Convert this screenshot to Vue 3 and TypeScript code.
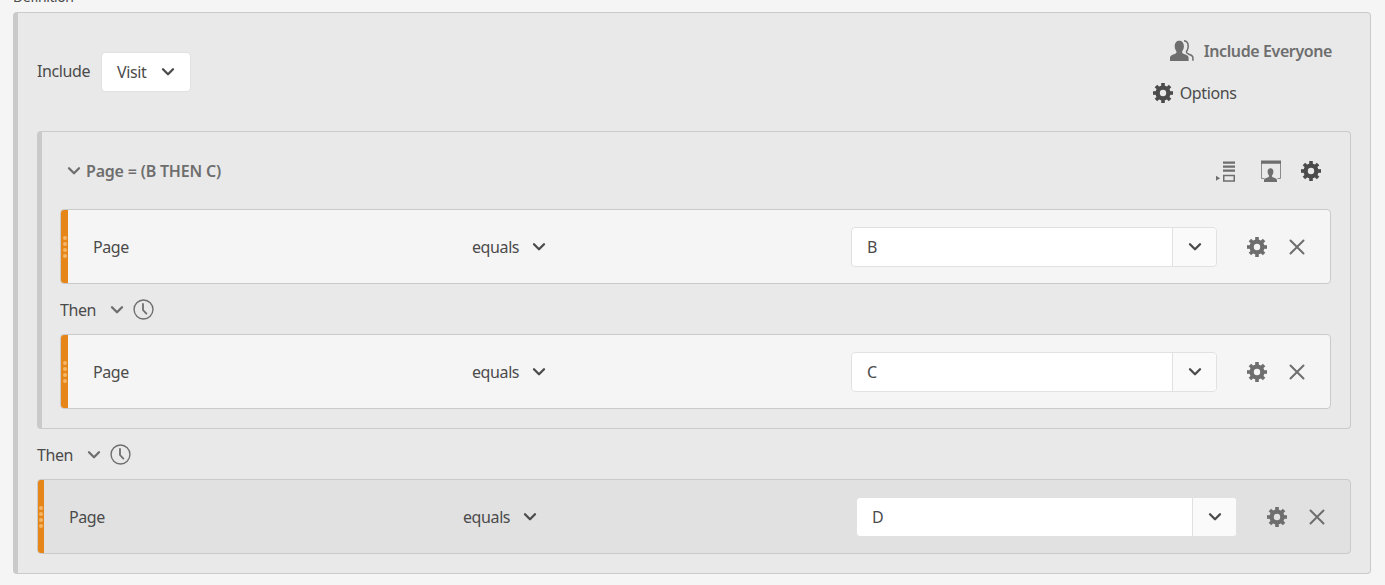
<script setup lang="ts">
interface Rule { value: string }
const innerRules: Rule[] = [{ value: 'B' }, { value: 'C' }]
const teeth = [0, 45, 90, 135, 180, 225, 270, 315]
</script>

<template>
  <div class="page">
    <svg class="defs" width="0" height="0" aria-hidden="true">
      <symbol id="gear" viewBox="0 0 20 20">
        <circle cx="10" cy="10" r="5.4" fill="none" stroke="currentColor" stroke-width="4.4" />
        <rect v-for="t in teeth" :key="t" x="8.2" y="0" width="3.6" height="4" fill="currentColor" :transform="`rotate(${t} 10 10)`" />
      </symbol>
      <symbol id="chev" viewBox="0 0 14 10">
        <path d="M2 2.200 7 7.200 12 2.200" fill="none" stroke="currentColor" stroke-width="2.300" stroke-linecap="round" stroke-linejoin="round" />
      </symbol>
      <symbol id="close" viewBox="0 0 16 16">
        <path d="M1.500 1.500 14.500 14.500M14.500 1.500 1.500 14.500" fill="none" stroke="currentColor" stroke-width="2" stroke-linecap="round" />
      </symbol>
      <symbol id="clock" viewBox="0 0 20 20">
        <circle cx="10" cy="10" r="9" fill="none" stroke="currentColor" stroke-width="1.300" />
        <path d="M9.500 4V10.500L13.200 14.500" fill="none" stroke="currentColor" stroke-width="1.700" />
      </symbol>
    </svg>

    <div class="label">Definition *</div>

    <section class="panel">
      <header class="top">
        <div class="include">
          <span class="txt">Include</span>
          <button class="select" type="button">
            <span class="txt">Visit</span>
            <svg class="chev dark"><use href="#chev" /></svg>
          </button>
        </div>
        <div class="top-actions">
          <div class="everyone">
            <svg class="people" viewBox="0 0 24 22">
              <path fill="#6e6e6e" d="M0 21v-3.500c0-1.700 2-2.600 4-3.300 1.800-.6 2.500-1.200 2.500-2.200 0-.7-.5-1.200-1-2.200C4.900 8.700 4.700 7.500 4.700 6.200 4.700 2.700 6.600.7 9.300.7s4.600 2 4.600 5.500c0 1.300-.2 2.500-.8 3.600-.5 1-1 1.500-1 2.200 0 1 .7 1.600 2.500 2.200 2 .7 4 1.600 4 3.300V21Z" />
              <path fill="none" stroke="#6e6e6e" stroke-width="1.500" d="M14 .8c2.500.2 4.200 2.200 4.200 5.400 0 1.300-.3 2.500-.8 3.600-.5 1-1 1.500-1 2.200 0 1 .7 1.500 2.500 2.200 2 .7 4 1.600 4 3.300v3.300" />
            </svg>
            <span>Include Everyone</span>
          </div>
          <div class="options">
            <svg class="gear darker"><use href="#gear" /></svg>
            <span class="txt">Options</span>
          </div>
        </div>
      </header>

      <section class="group">
        <div class="group-head">
          <div class="group-title">
            <svg class="chev small"><use href="#chev" /></svg>
            <span>Page = (B THEN C)</span>
          </div>
          <div class="group-icons">
            <svg class="ico" viewBox="0 0 20 22">
              <path fill="#6e6e6e" d="M7 1.500h12v2.200H7zM7 5.500h12v2.200H7zM7 9.500h12v2.200H7z" />
              <path fill="none" stroke="#6e6e6e" stroke-width="1.500" d="M7.750 15.500h10.500v5.500H7.750z" />
              <path fill="#6e6e6e" d="M0 15.800 4 18.300 0 20.800z" />
            </svg>
            <svg class="ico" viewBox="0 0 20 22">
              <path fill="none" stroke="#8a8a8a" stroke-width="1" d="M3.500 18.500H.5V2h19v16.500h-3" />
              <path fill="#6e6e6e" d="M0 .5h20v3.200H0zM3 22v-2c0-1.300 1.800-1.900 3.500-2.500 1.200-.4 1.600-.9 1.600-1.500 0-.5-.4-.9-.9-1.700-.4-.8-.6-1.500-.6-2.500 0-2.200 1-3.600 2.900-3.600s2.900 1.400 2.900 3.600c0 1-.2 1.700-.6 2.500-.5.800-.9 1.200-.9 1.700 0 .6.400 1.100 1.600 1.500 1.700.6 3.500 1.200 3.500 2.500v2z" />
            </svg>
            <svg class="gear darker"><use href="#gear" /></svg>
          </div>
        </div>

        <template v-for="(r, i) in innerRules" :key="r.value">
          <div v-if="i > 0" class="then inner-then">
            <span class="txt">Then</span>
            <svg class="chev small"><use href="#chev" /></svg>
            <svg class="clock"><use href="#clock" /></svg>
          </div>
          <div class="rule">
            <div class="grip"><i /><i /><i /><i /></div>
            <span class="txt field">Page</span>
            <div class="op"><span class="txt">equals</span><svg class="chev dark"><use href="#chev" /></svg></div>
            <div class="combo">
              <span class="txt combo-value">{{ r.value }}</span>
              <span class="combo-btn"><svg class="chev dark"><use href="#chev" /></svg></span>
            </div>
            <svg class="gear soft"><use href="#gear" /></svg>
            <svg class="x"><use href="#close" /></svg>
          </div>
        </template>
      </section>

      <div class="then outer-then">
        <span class="txt">Then</span>
        <svg class="chev small"><use href="#chev" /></svg>
        <svg class="clock"><use href="#clock" /></svg>
      </div>

      <div class="rule wide">
        <div class="grip"><i /><i /><i /><i /></div>
        <span class="txt field">Page</span>
        <div class="op"><span class="txt">equals</span><svg class="chev dark"><use href="#chev" /></svg></div>
        <div class="combo">
          <span class="txt combo-value">D</span>
          <span class="combo-btn"><svg class="chev dark"><use href="#chev" /></svg></span>
        </div>
        <svg class="gear soft"><use href="#gear" /></svg>
        <svg class="x"><use href="#close" /></svg>
      </div>
    </section>
  </div>
</template>

<style>
html, body { margin: 0; background: #f5f5f5; overflow: hidden; }
</style>

<style scoped>
.page {
  position: relative;
  height: 585px;
  box-sizing: border-box;
  padding: 12px 14px 0 13px;
  background: #f5f5f5;
  color: #4b4b4b;
  font-family: "Noto Sans", "Open Sans", sans-serif;
  font-size: 16px;
  letter-spacing: -0.4px;
  overflow: hidden;
}
.defs { position: absolute; }
.label { position: absolute; top: -13px; left: 13px; font-size: 14px; line-height: 20px; word-spacing: 3px; }
.txt { line-height: 20px; }
.panel {
  height: 562px;
  box-sizing: border-box;
  padding: 0 19px 0 19px;
  background: #e9e9e9;
  border: 1px solid #cacaca;
  border-left: 5px solid #cacaca;
  border-radius: 4px;
}
.top { height: 118px; display: flex; justify-content: space-between; }
.include { display: flex; align-items: center; gap: 11px; height: 118px; margin-top: -1px; }
.select {
  width: 90px;
  height: 40px;
  display: flex;
  align-items: center;
  justify-content: space-between;
  padding: 0 15px 0 15px;
  box-sizing: border-box;
  background: #fff;
  border: 1px solid #e1e1e1;
  border-radius: 4px;
  color: inherit;
  font: inherit;
  letter-spacing: inherit;
  margin-top: 1px;
}
.chev { width: 14px; height: 10px; flex: none; }
.chev.dark { color: #4b4b4b; }
.chev.small { color: #6e6e6e; }
.top-actions { display: flex; flex-direction: column; align-items: flex-end; padding: 25px 19px 0 0; }
.everyone { display: flex; align-items: center; gap: 10px; height: 26px; font-weight: 600; color: #6e6e6e; }
.people { width: 24px; height: 22px; }
.options { display: flex; align-items: center; gap: 7px; height: 26px; margin-top: 16px; align-self: flex-start; margin-left: -17px; }
.gear { width: 20px; height: 20px; flex: none; }
.gear.darker { color: #4b4b4b; }
.gear.soft { color: #6e6e6e; }
.group {
  box-sizing: border-box;
  height: 298px;
  padding: 0 19px 0 18px;
  border: 1px solid #cacaca;
  border-left: 5px solid #cacaca;
  border-radius: 4px;
}
.group-head { height: 77px; display: flex; align-items: center; justify-content: space-between; padding: 0 10px 0 7px; }
.group-title { display: flex; align-items: center; gap: 5px; font-weight: 600; color: #6e6e6e; letter-spacing: -0.2px; }
.group-icons { display: flex; align-items: center; gap: 25px; }
.group-icons .gear { margin-left: -5px; }
.ico { width: 20px; height: 22px; }
.then { display: flex; align-items: center; padding-top: 1px; box-sizing: border-box; }
.then .chev { margin-left: 14px; margin-right: 9px; }
.clock { width: 21px; height: 21px; color: #6e6e6e; }
.inner-then { height: 50px; }
.outer-then { height: 50px; }
.rule {
  --op-x: 345px;
  --combo-w: 366px;
  --combo-x: 303px;
  height: 75px;
  box-sizing: border-box;
  display: flex;
  align-items: center;
  background: #f5f5f5;
  border: 1px solid #cacaca;
  border-radius: 4px;
  overflow: hidden;
}
.rule.wide {
  --op-x: 360px;
  --combo-w: 381px;
  --combo-x: 317px;
  background: #e1e1e1;
}
.grip {
  align-self: stretch;
  width: 7px;
  background: #e68619;
  display: flex;
  flex-direction: column;
  align-items: center;
  justify-content: center;
  gap: 2px;
  flex: none;
}
.wide .grip { width: 6px; }
.grip i { width: 4px; height: 4px; border-radius: 50%; background: #f5b668; }
.field { width: 34px; margin-left: 25px; flex: none; }
.op { display: flex; align-items: center; gap: 13px; margin-left: var(--op-x); width: 76px; flex: none; }
.combo {
  margin-left: var(--combo-x);
  width: var(--combo-w);
  height: 40px;
  box-sizing: border-box;
  display: flex;
  align-items: center;
  justify-content: space-between;
  background: #fff;
  border: 1px solid #e1e1e1;
  border-radius: 4px;
  flex: none;
}
.combo-value { padding-left: 15px; }
.combo-btn {
  width: 44px;
  height: 100%;
  box-sizing: border-box;
  display: flex;
  align-items: center;
  justify-content: center;
  border-left: 1px solid #e1e1e1;
  background: #fafafa;
  border-radius: 0 4px 4px 0;
}
.rule .gear { margin-left: 30px; }
.x { width: 16px; height: 16px; margin-left: 22px; color: #6e6e6e; flex: none; }
</style>
